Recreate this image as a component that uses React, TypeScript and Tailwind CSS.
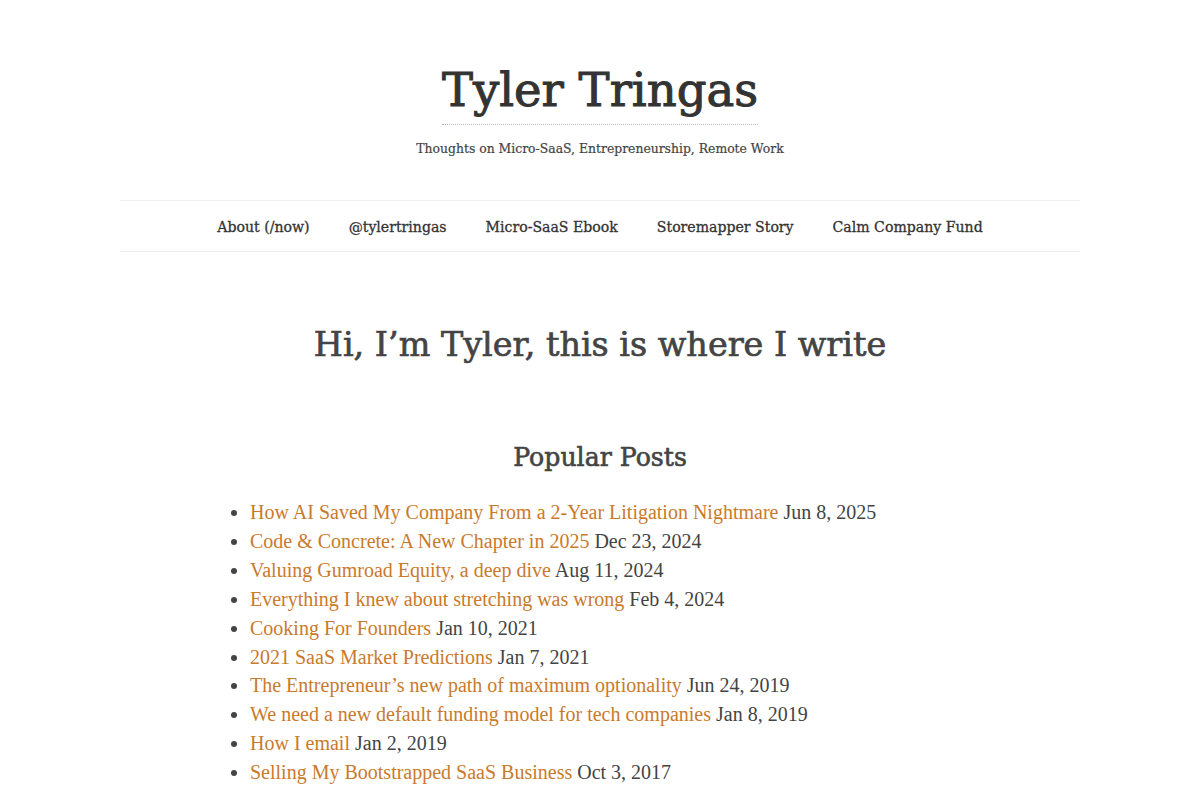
const posts: [string, string][] = [
  ["How AI Saved My Company From a 2-Year Litigation Nightmare", "Jun 8, 2025"],
  ["Code & Concrete: A New Chapter in 2025", "Dec 23, 2024"],
  ["Valuing Gumroad Equity, a deep dive", "Aug 11, 2024"],
  ["Everything I knew about stretching was wrong", "Feb 4, 2024"],
  ["Cooking For Founders", "Jan 10, 2021"],
  ["2021 SaaS Market Predictions", "Jan 7, 2021"],
  ["The Entrepreneur’s new path of maximum optionality", "Jun 24, 2019"],
  ["We need a new default funding model for tech companies", "Jan 8, 2019"],
  ["How I email", "Jan 2, 2019"],
  ["Selling My Bootstrapped SaaS Business", "Oct 3, 2017"],
];

const nav = ["About (/now)", "@tylertringas", "Micro-SaaS Ebook", "Storemapper Story", "Calm Company Fund"];

const slab = "font-['DejaVu_Serif',serif]";
const body = "font-['Liberation_Serif',serif]";

export default function App() {
  return (
    <div className="min-h-screen bg-white text-[#444]">
      <div className="mx-auto w-[960px]">
        <header className="flex flex-col items-center pt-[60px]">
          <h1
            className={`${slab} text-[46.5px] leading-[60px] text-[#333] [-webkit-text-stroke:1px_#333] border-b border-dotted border-[#bbb] pb-[4px]`}
          >
            Tyler Tringas
          </h1>
          <p className={`${slab} mt-[14px] text-[12.4px] leading-[20px] text-[#444] [-webkit-text-stroke:0.2px_#444]`}>
            Thoughts on Micro-SaaS, Entrepreneurship, Remote Work
          </p>
        </header>

        <nav className="mt-[41px] flex h-[52px] items-center justify-center border-y border-[#eee] pt-[3px]">
          {nav.map((item) => (
            <a key={item} className={`${slab} px-[19.5px] text-[14.1px] text-[#333] [-webkit-text-stroke:0.3px_#333]`}>
              {item}
            </a>
          ))}
        </nav>

        <main className="flex flex-col items-center">
          <h2 className={`${slab} mt-[69px] text-[33.4px] leading-[48px] text-[#444] [-webkit-text-stroke:0.7px_#444]`}>
            Hi, I’m Tyler, this is where I write
          </h2>
          <h3 className={`${slab} mt-[71px] text-[25.2px] leading-[36px] text-[#444] [-webkit-text-stroke:0.6px_#444]`}>
            Popular Posts
          </h3>
          <ul className={`${body} mt-[22px] w-[740px] list-disc pl-[20px] text-[20px] leading-[28.9px] marker:text-[#444]`}>
            {posts.map(([title, date]) => (
              <li key={title}>
                <a className="text-[#c97a2c]">{title}</a> <span className="text-[#444]">{date}</span>
              </li>
            ))}
          </ul>
        </main>
      </div>
    </div>
  );
}
